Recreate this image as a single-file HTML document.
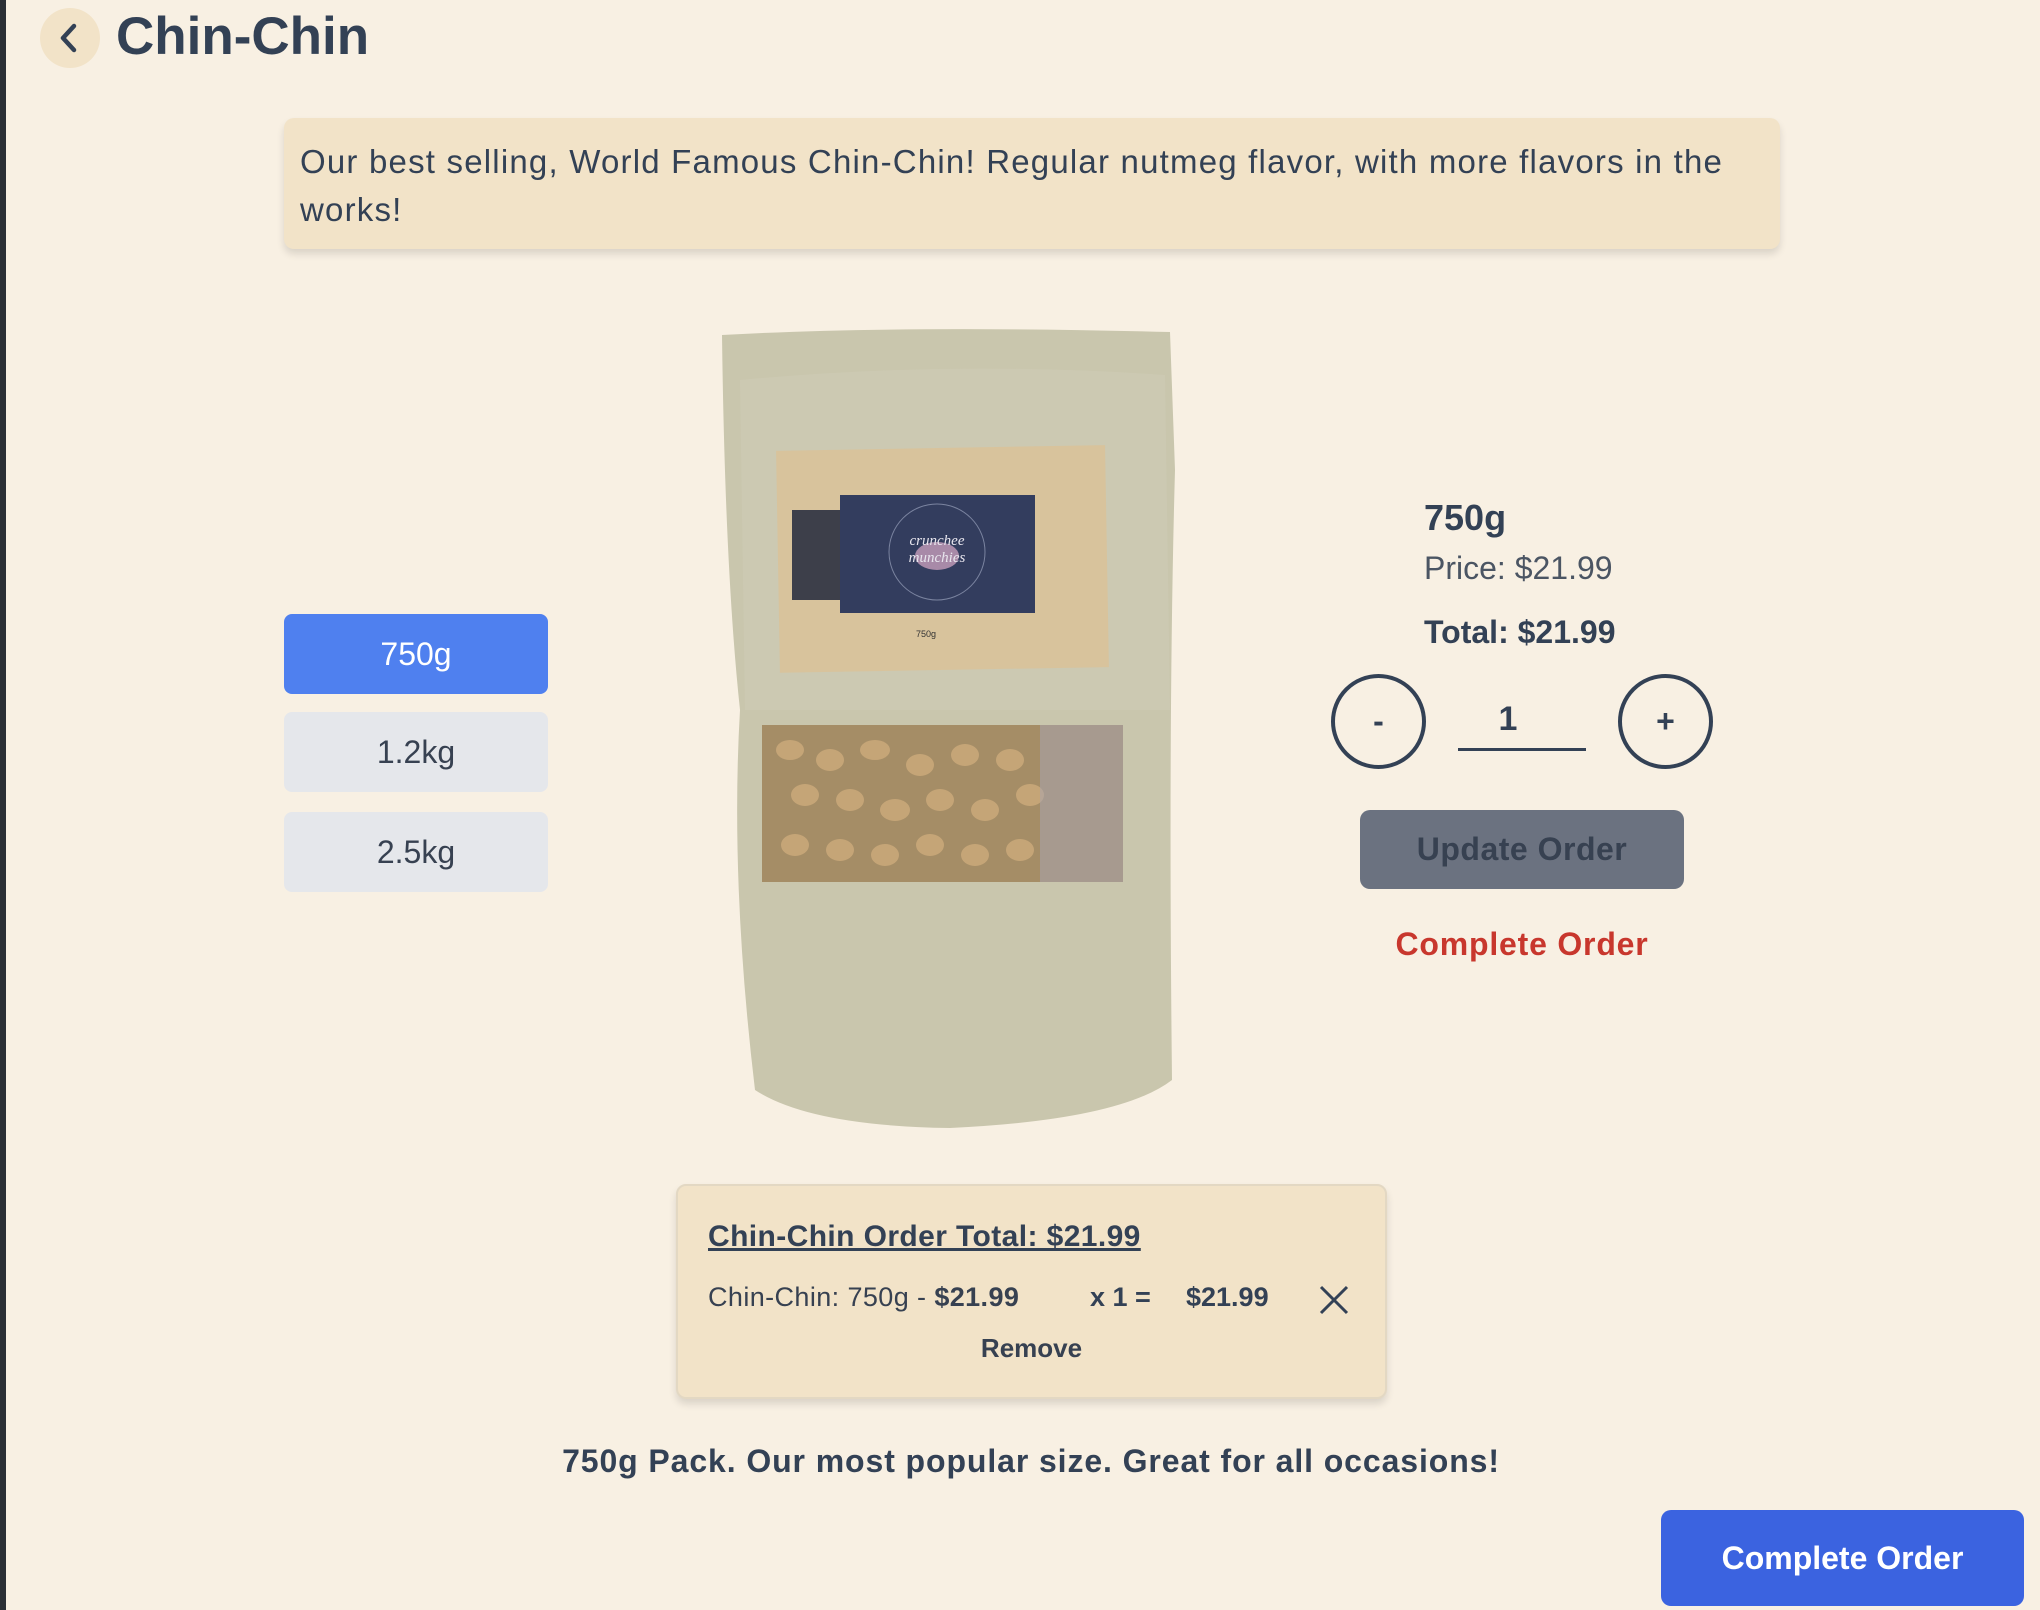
<!DOCTYPE html>
<html><head><meta charset="utf-8"><style>
*{margin:0;padding:0;box-sizing:border-box}
html,body{width:2040px;height:1610px;overflow:hidden}
body{background:#f8f0e3;font-family:"Liberation Sans",sans-serif;color:#334155;position:relative}
.a{position:absolute}
.lb{left:0;top:0;width:6px;height:1610px;background:#2b2f36}
.back{left:40px;top:8px;width:60px;height:60px;border-radius:50%;background:#f2e3c8}
h1{position:absolute;left:116px;top:6px;font-size:53px;font-weight:bold;color:#334155;letter-spacing:0px}
.desc{left:284px;top:118px;width:1496px;height:131px;background:#f2e3c8;border-radius:10px;box-shadow:0 5px 8px rgba(0,0,0,0.12);padding:20px 16px;font-size:33px;line-height:48px;color:#334155;letter-spacing:1.2px;white-space:nowrap}
.sz{left:284px;width:264px;height:80px;border-radius:8px;background:#e5e7eb;font-size:32px;color:#374151;display:flex;align-items:center;justify-content:center}
.sz.on{background:#4f80ef;color:#fff}
.circ{width:95px;height:95px;border:4px solid #334155;border-radius:50%;display:flex;align-items:center;justify-content:center;font-size:32px;font-weight:bold;top:674px}
.upd{left:1360px;top:810px;width:324px;height:79px;background:#6b7280;border-radius:10px;color:#374151;font-weight:bold;font-size:32px;display:flex;align-items:center;justify-content:center;letter-spacing:0.5px}
.box{left:676px;top:1184px;width:711px;height:215px;background:#f2e3c8;border-radius:10px;border:2px solid #e3d8c3;box-shadow:0 5px 8px rgba(0,0,0,0.12)}
.cta{left:1661px;top:1510px;width:363px;height:96px;background:#3b63e0;border-radius:10px;color:#fff;font-weight:bold;font-size:32px;display:flex;align-items:center;justify-content:center}
</style></head><body>
<div class="a lb"></div>
<div class="a back"><svg width="60" height="60" viewBox="0 0 60 60"><path d="M34 18 L23 30 L34 42" fill="none" stroke="#334155" stroke-width="4.5" stroke-linecap="round" stroke-linejoin="round"/></svg></div>
<h1>Chin-Chin</h1>
<div class="a desc">Our best selling, World Famous Chin-Chin! Regular nutmeg flavor, with more flavors in the<br>works!</div>

<div class="a sz on" style="top:614px">750g</div>
<div class="a sz" style="top:712px">1.2kg</div>
<div class="a sz" style="top:812px">2.5kg</div>

<svg class="a" style="left:700px;top:320px" width="500" height="820" viewBox="0 0 500 820">
<path d="M22 15 Q200 5 470 12 L475 150 Q468 400 472 760 Q420 800 250 808 Q110 806 55 770 Q30 560 40 390 Q25 250 22 15Z" fill="#c9c6ad"/>
<path d="M40 60 Q250 40 465 55 L470 390 L45 390Z" fill="#cfccb6" opacity="0.6"/>
<rect x="78" y="128" width="329" height="222" fill="#d8c39c" transform="rotate(-1 240 240)"/>
<rect x="92" y="190" width="48" height="90" fill="#3d3f4a"/>
<rect x="140" y="175" width="195" height="118" fill="#333d5e"/>
<circle cx="237" cy="232" r="48" fill="none" stroke="#7b84a0" stroke-width="1"/>
<ellipse cx="237" cy="236" rx="22" ry="14" fill="#a88aa8"/>
<text x="237" y="225" font-family="Liberation Serif,serif" font-style="italic" font-size="15" fill="#e8e6ee" text-anchor="middle">crunchee</text>
<text x="237" y="242" font-family="Liberation Serif,serif" font-style="italic" font-size="15" fill="#e8e6ee" text-anchor="middle">munchies</text>
<text x="216" y="317" font-size="9" fill="#333">750g</text>
<rect x="62" y="405" width="361" height="157" fill="#a58d66"/>
<g fill="#c5a577">
<ellipse cx="90" cy="430" rx="14" ry="10"/><ellipse cx="130" cy="440" rx="14" ry="11"/><ellipse cx="175" cy="430" rx="15" ry="10"/><ellipse cx="220" cy="445" rx="14" ry="11"/><ellipse cx="265" cy="435" rx="14" ry="11"/><ellipse cx="310" cy="440" rx="14" ry="11"/>
<ellipse cx="105" cy="475" rx="14" ry="11"/><ellipse cx="150" cy="480" rx="14" ry="11"/><ellipse cx="195" cy="490" rx="15" ry="11"/><ellipse cx="240" cy="480" rx="14" ry="11"/><ellipse cx="285" cy="490" rx="14" ry="11"/><ellipse cx="330" cy="475" rx="14" ry="11"/>
<ellipse cx="95" cy="525" rx="14" ry="11"/><ellipse cx="140" cy="530" rx="14" ry="11"/><ellipse cx="185" cy="535" rx="14" ry="11"/><ellipse cx="230" cy="525" rx="14" ry="11"/><ellipse cx="275" cy="535" rx="14" ry="11"/><ellipse cx="320" cy="530" rx="14" ry="11"/>
</g>
<rect x="340" y="405" width="83" height="157" fill="#a9a6b0" opacity="0.55"/>
</svg>

<div class="a" style="left:1424px;top:497px;font-size:36px;font-weight:bold">750g</div>
<div class="a" style="left:1424px;top:550px;font-size:32px;color:#4b5563">Price: $21.99</div>
<div class="a" style="left:1424px;top:614px;font-size:32px;font-weight:bold">Total: $21.99</div>
<div class="a circ" style="left:1331px">-</div>
<div class="a" style="left:1458px;top:700px;width:100px;text-align:center;font-size:34px;font-weight:bold">1</div>
<div class="a" style="left:1458px;top:748px;width:128px;height:3px;background:#334155"></div>
<div class="a circ" style="left:1618px">+</div>
<div class="a upd">Update Order</div>
<div class="a" style="left:1360px;top:926px;width:324px;text-align:center;font-size:32px;font-weight:bold;color:#c8372d;letter-spacing:0.8px">Complete Order</div>

<div class="a box"></div>
<div class="a" style="left:708px;top:1220px;font-size:30px;font-weight:bold;text-decoration:underline;letter-spacing:0.4px">Chin-Chin Order Total: $21.99</div>
<div class="a" style="left:708px;top:1282px;font-size:27px;color:#374151;letter-spacing:0.4px">Chin-Chin: 750g - <b>$21.99</b></div>
<div class="a" style="left:1090px;top:1282px;font-size:27px;font-weight:bold">x 1 =</div>
<div class="a" style="left:1186px;top:1282px;font-size:27px;font-weight:bold">$21.99</div>
<svg class="a" style="left:1318px;top:1285px" width="32" height="30"><path d="M3 2 L29 28 M29 2 L3 28" stroke="#334155" stroke-width="3"/></svg>
<div class="a" style="left:676px;top:1333px;width:711px;text-align:center;font-size:26px;font-weight:bold;color:#374151">Remove</div>

<div class="a" style="left:0;top:1443px;width:2040px;text-align:center;font-size:32px;font-weight:bold;letter-spacing:0.9px"><span style="position:relative;left:11px">750g Pack. Our most popular size. Great for all occasions!</span></div>
<div class="a cta">Complete Order</div>
</body></html>
